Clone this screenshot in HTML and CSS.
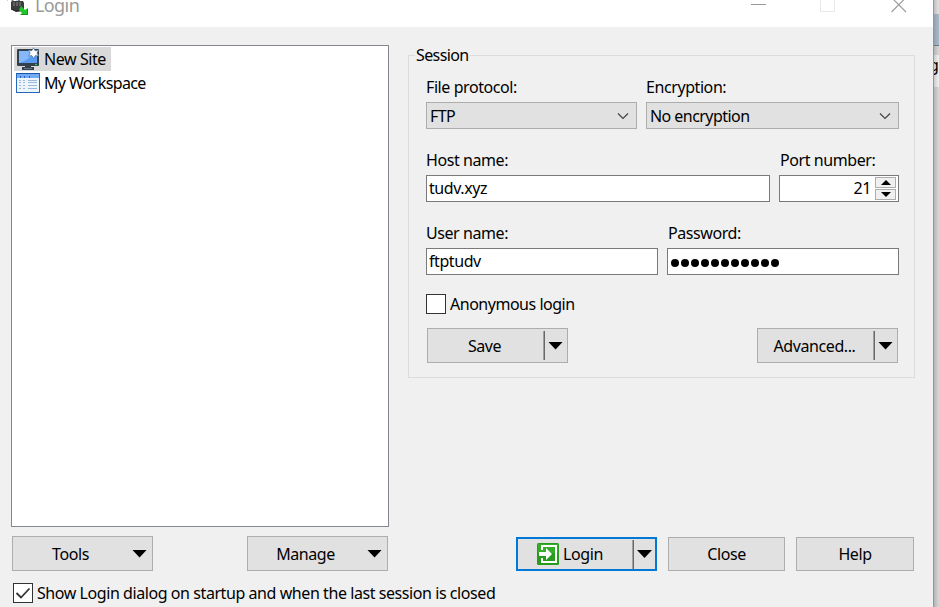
FILE: index.html
```html
<!DOCTYPE html>
<html lang="en">
<head>
<meta charset="utf-8">
<title>Login</title>
<link rel="stylesheet" href="styles.css">
</head>
<body>
<div class="screen">
<main class="dialog">
  <header class="titlebar">
    <svg class="app-icon" width="22" height="16" viewBox="0 0 22 16"><path d="M0 0h1M9 0h2" stroke="#78aee0"/><path d="M5.500 2V0M12 2V0" stroke="#777" stroke-width="2"/><path d="M4 2l2-1h10l1 2v8l-8 1-5-3z" fill="#3c3c3c"/><path d="M7 2v4M10 2v4M13 2v4" stroke="#8a8a8a"/><path d="M4 9l5 2 6-1" stroke="#222" fill="none"/><path d="M14 6l4 4 3-2v7h-8l2-2-3-3z" fill="#20c52b"/><path d="M14 14.500h6.500V9" stroke="#119220" fill="none"/></svg>
    <span class="caption">Login</span>
    <div class="controls">
      <svg width="16" height="16" viewBox="0 0 16 16"><path d="M0 4.500h15" stroke="#999"/></svg>
      <svg width="16" height="16" viewBox="0 0 16 16"><path d="M.5-2.500h14v14H.5z" stroke="#e8e8e8" fill="none"/></svg>
      <svg width="16" height="16" viewBox="0 0 16 16"><path d="M.5-2.500L15 12M15-2.500L.5 12" stroke="#999" stroke-width="1.100"/></svg>
    </div>
  </header>
  <div class="content">
    <section class="left">
      <ul class="sites">
        <li class="selected"><svg width="24" height="24" viewBox="0 0 24 24"><rect x="1" y="2" width="22" height="17" rx="1" fill="#34404b"/><rect x="3" y="4" width="18" height="12" fill="#579cf2"/><path d="M3 16V4h16C15 11 9 14 3 16z" fill="#86b9fa"/><path d="M9 18h6v2h3v3H6v-3h3z" fill="#34404b"/><path d="M8 21.500h8" stroke="#627684"/><path d="M17.500.8l1.600 3 3.400-.8-1.500 3.100 1.600 2.800-3.200-.3-1.800 3-1.700-3-3.400.5 1.700-3-1.800-3 3.400.6z" fill="#fff" stroke="#426c94" stroke-width=".7"/><path d="M19 17.500h2" stroke="#35d54b"/></svg><span>New Site</span></li>
        <li class="workspace"><svg width="24" height="24" viewBox="0 0 24 24"><rect x=".5" y="2.500" width="23" height="19" fill="#edf4fb" stroke="#2467b9"/><path d="M1 3h22v4H1z" fill="#72aaf4"/><path d="M1 2.500h22" stroke="#1757a8"/><path d="M4.500 5v2M8.500 5v2M13.500 5v2" stroke="#2467b9"/><path d="M3 9.500h2M7 9.500h2M12 9.500h9M3 11.500h2M7 11.500h2M12 11.500h9M3 14.500h2M7 14.500h2M12 14.500h9M3 17.500h2M7 17.500h2M12 17.500h9" stroke="#9ab8d6"/></svg><span>My Workspace</span></li>
      </ul>
      <div class="tools">
        <button class="btn menu"><span class="label">Tools</span><i class="arrow"></i></button>
        <button class="btn menu"><span class="label">Manage</span><i class="arrow"></i></button>
      </div>
    </section>
    <section class="right">
      <fieldset>
        <legend>Session</legend>
        <div class="row protocols">
          <div class="field"><label>File protocol:</label><div class="select"><span>FTP</span><svg width="12" height="8" viewBox="0 0 12 8"><path d="M1 1.500l5 5 5-5" fill="none" stroke="#444" stroke-width="1.200"/></svg></div></div>
          <div class="field"><label>Encryption:</label><div class="select"><span>No encryption</span><svg width="12" height="8" viewBox="0 0 12 8"><path d="M1 1.500l5 5 5-5" fill="none" stroke="#444" stroke-width="1.200"/></svg></div></div>
        </div>
        <div class="row host">
          <div class="field"><label>Host name:</label><div class="input"><span>tudv.xyz</span></div></div>
          <div class="field port"><label>Port number:</label><div class="input number"><span>21</span><div class="spin"><i><svg width="10" height="5"><path d="M0 5l5-5 5 5z"/></svg></i><i><svg width="10" height="5"><path d="M0 0l5 5 5-5z"/></svg></i></div></div></div>
        </div>
        <div class="row account">
          <div class="field"><label>User name:</label><div class="input"><span>ftptudv</span></div></div>
          <div class="field pass"><label>Password:</label><div class="input dots"><b></b><b></b><b></b><b></b><b></b><b></b><b></b><b></b><b></b><b></b><b></b></div></div>
        </div>
        <div class="check anonymous"><i class="box"></i><span>Anonymous login</span></div>
        <div class="actions">
          <button class="btn split"><span class="label">Save</span><i class="rule"></i><i class="arrow"></i></button>
          <button class="btn split"><span class="label">Advanced...</span><i class="rule"></i><i class="arrow"></i></button>
        </div>
      </fieldset>
      <div class="bottom">
        <button class="btn split primary"><span class="label"><svg width="22" height="22" viewBox="0 0 22 22"><rect width="22" height="22" rx="1.500" fill="#279b1d"/><rect x="1" y="1" width="20" height="9" fill="#36ad29"/><path d="M5 7V3h14v16H5v-4" fill="none" stroke="#fff" stroke-width="2"/><path d="M2 9h7V5l6 6-6 6v-4H2z" fill="#fff"/></svg><span>Login</span></span><i class="rule"></i><i class="arrow"></i></button>
        <button class="btn plain">Close</button>
        <button class="btn plain help">Help</button>
      </div>
    </section>
  </div>
  <div class="check startup"><i class="box"><svg width="18" height="18" viewBox="0 0 18 18"><path d="M2.500 9l4.500 4.500L15.500 4.500" fill="none" stroke="#333" stroke-width="1.800"/></svg></i><span>Show Login dialog on startup and when the last session is closed</span></div>
</main>
<aside class="behind"><div class="b1"></div><div class="b2"></div><div class="b3"><span>g</span></div></aside>
</div>
</body>
</html>
```
FILE: styles.css
```css
* { box-sizing: border-box; }
body { margin: 0; overflow: hidden; font: 16px/20px "Noto Sans", "Open Sans", sans-serif; letter-spacing: -.42px; color: #000; }
.screen { display: flex; width: 939px; height: 607px; overflow: hidden; }
.dialog { width: 933px; height: 607px; background: #f0f0f0; overflow: hidden; }
i { font-style: normal; display: block; }
svg { display: block; flex: none; overflow: hidden; }
span, label { white-space: nowrap; }
.titlebar { height: 27px; background: #fff; display: flex; align-items: flex-start; padding-left: 7px; }
.caption { color: #999; font-size: 18px; line-height: 22px; letter-spacing: -.6px; margin: -6px 0 0 6px; }
.controls { margin-left: auto; display: flex; gap: 54px; padding-right: 26px; }
.controls svg:nth-child(2) { margin: 0 1px 0 -1px; }
.content { display: flex; height: 555px; }
.left { width: 378px; margin: 18px 0 0 11px; }
.sites { list-style: none; margin: 0; padding: 1px 2px; height: 482px; background: #fff; border: 1px solid #828790; }
.sites li { display: flex; align-items: center; width: max-content; height: 24px; padding: 0 4px 0 2px; gap: 4px; }
.sites .selected { width: 97px; background: #d9d9d9; }
.workspace { letter-spacing: -.65px; }
.tools { display: flex; justify-content: space-between; padding: 9px 1px 0; }
.btn { font: inherit; letter-spacing: inherit; color: inherit; margin: 0; padding: 0; background: #e1e1e1; border: 1px solid #adadad; height: 35px; display: flex; align-items: center; justify-content: center; }
.menu, .split { width: 141px; justify-content: flex-start; }
.label { width: 115px; display: flex; align-items: center; justify-content: center; gap: 4px; }
.arrow { width: 15px; height: 8px; background: #000; clip-path: polygon(0 0, 100% 0, 50% 100%); margin-left: 4px; }
.rule { width: 2px; height: 29px; background: #696969; border-left: 1px solid #a0a0a0; }
.split .label { padding-right: 2px; }
.split .arrow { margin-left: 3px; }
.right { width: 507px; margin: 18px 0 0 19px; }
fieldset { margin: 0; padding: 0 15px 0 17px; border: 1px solid #dcdcdc; height: 333px; min-width: 0; }
legend { padding: 0 1px; margin-left: -11px; height: 20px; letter-spacing: -.6px; }
.row { display: flex; gap: 9px; height: 73px; }
.protocols { margin-top: 12px; }
.field { flex: none; }
.field label { display: block; height: 25px; }
.port label, .pass label { padding-left: 1px; }
.select, .input { height: 27px; border: 1px solid #7a7a7a; background: #fff; display: flex; align-items: center; padding: 0 2px; }
.input span { margin-top: -1px; }
.select { background: #e1e1e1; border-color: #adadad; padding: 0 7px 0 3px; justify-content: space-between; letter-spacing: -.55px; }
.protocols .field:first-child { width: 211px; }
.protocols .field:last-child { width: 253px; }
.host .field:first-child { width: 344px; }
.port { width: 120px; }
.account .field { width: 232px; }
.number { justify-content: flex-end; gap: 4px; }
.spin { display: grid; gap: 1px; }
.spin i { width: 21px; height: 11px; border: 1px solid #adadad; background: #f0f0f0; display: grid; place-items: center; }
.dots { gap: 2px; padding-left: 3px; }
.dots b { width: 8px; height: 8px; border-radius: 50%; background: #000; margin-top: 2px; }
.check { display: flex; align-items: center; gap: 4px; height: 20px; }
.anonymous { margin-top: -2px; letter-spacing: -.48px; }
.box { width: 20px; height: 20px; border: 1px solid #333; background: #fff; }
.actions { display: flex; justify-content: space-between; padding: 14px 1px 0; }
.bottom { display: flex; padding: 159px 0 0 108px; }
.primary { border: 2px solid #0078d7; height: 34px; }
.primary .label { width: 114px; padding-right: 10px; }
.plain { width: 117px; height: 34px; margin-left: 11px; }
.help { width: 118px; }
.startup { margin: 1px 0 0 13px; letter-spacing: -.43px; }
.behind { width: 6px; background: linear-gradient(90deg, #b4b4b4, #d8d8d8); border-left: 1px solid #969696; overflow: hidden; }
.b1 { height: 14px; background: linear-gradient(90deg, #bebebe, #e2e2e2); }
.b2 { height: 32px; background: linear-gradient(90deg, #93a0b0, #aabaca); border-bottom: 1px solid #6c7684; }
.b3 { height: 32px; background: linear-gradient(90deg, #ccc, #f1f1f1); }
.b3 span { display: block; margin: 9px 0 0 -5px; }
```
